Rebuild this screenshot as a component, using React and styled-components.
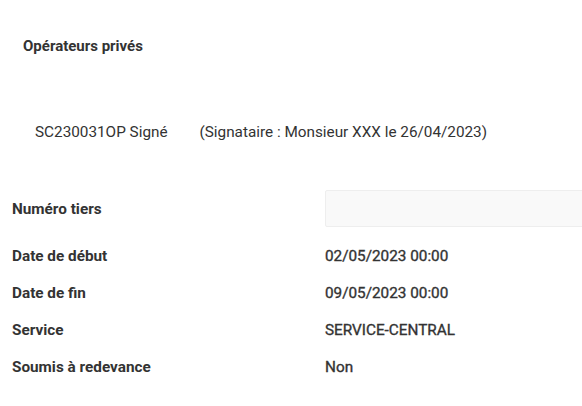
import React from "react";
import styled, { createGlobalStyle } from "styled-components";

const GlobalStyle = createGlobalStyle`
  body {
    margin: 0;
    background: #ffffff;
    font-family: Roboto, "Liberation Sans", sans-serif;
    color: #333333;
  }
`;

const Page = styled.div`
  width: 582px;
  height: 406px;
  overflow: hidden;
`;

const Title = styled.h3`
  margin: 0;
  padding: 36px 0 0 23px;
  font-size: 15px;
  font-weight: 700;
  line-height: 20px;
  color: #333333;
`;

const SignedLine = styled.div`
  display: flex;
  gap: 32px;
  padding: 66px 0 0 35px;
  font-size: 15.3px;
  line-height: 20px;
  color: #333333;
`;

const Fields = styled.div`
  display: flex;
  flex-direction: column;
  padding: 48px 0 0 12px;
`;

const Row = styled.div`
  display: grid;
  grid-template-columns: 313px 1fr;
  align-items: center;
  height: 37px;
  margin-bottom: ${(p) => (p.$spaced ? "10px" : "0")};
`;

const Label = styled.div`
  font-size: 15.3px;
  font-weight: 700;
  color: #333333;
`;

const Value = styled.div`
  font-size: 15.3px;
  font-weight: 400;
  -webkit-text-stroke: 0.35px #333333;
  color: #333333;
`;

const Input = styled.div`
  box-sizing: border-box;
  height: 37px;
  margin-right: -20px;
  background: #f9f9f9;
  border: 1px solid #eeeeee;
  border-radius: 2px;
`;

const rows = [
  ["Date de début", "02/05/2023 00:00"],
  ["Date de fin", "09/05/2023 00:00"],
  ["Service", "SERVICE-CENTRAL"],
  ["Soumis à redevance", "Non"],
];

export default function App() {
  return (
    <Page>
      <GlobalStyle />
      <Title>Opérateurs privés</Title>
      <SignedLine>
        <span>SC230031OP Signé</span>
        <span>(Signataire : Monsieur XXX le 26/04/2023)</span>
      </SignedLine>
      <Fields>
        <Row $spaced>
          <Label>Numéro tiers</Label>
          <Input />
        </Row>
        {rows.map(([l, v]) => (
          <Row key={l}>
            <Label>{l}</Label>
            <Value>{v}</Value>
          </Row>
        ))}
      </Fields>
    </Page>
  );
}
